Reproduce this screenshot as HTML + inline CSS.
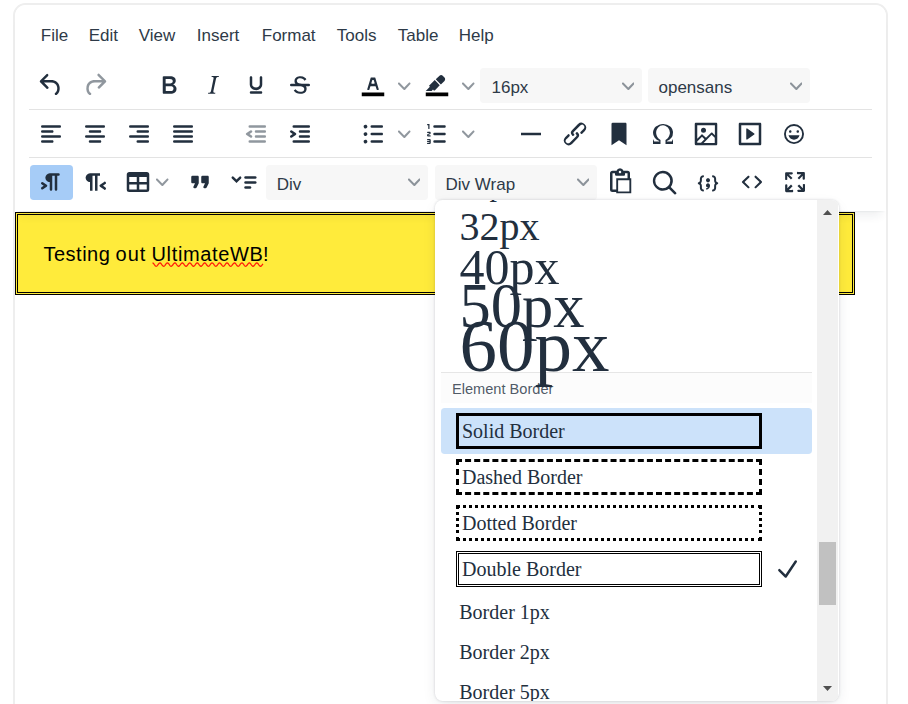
<!DOCTYPE html>
<html lang="en">
<head>
<meta charset="utf-8">
<title>Editor</title>
<style>
html,body{margin:0;padding:0;background:#fff;}
body{width:908px;height:704px;overflow:hidden;position:relative;font-family:"Liberation Sans",sans-serif;color:#222f3e;}
.abs{position:absolute;}
#frame{position:absolute;left:13px;top:3px;width:871px;height:760px;border:2px solid #eee;border-radius:12.5px;box-sizing:content-box;background:#fff;}
#header{position:absolute;left:15px;top:5px;width:871px;height:206px;background:#fff;border-radius:11px 11px 0 0;box-shadow:0 2.5px 2.5px -2.5px rgba(34,47,62,.1),0 10px 10px -5px rgba(34,47,62,.07);}
.hline{position:absolute;left:29px;width:843px;height:1px;background:#e3e3e3;}
.mi{position:absolute;top:24.75px;height:22px;line-height:22px;font-size:17px;white-space:nowrap;color:#2e3a48;}
.ic{position:absolute;width:30px;height:30px;}
.ic svg{width:30px;height:30px;display:block;fill:#222f3e;}
.ch{position:absolute;width:12.5px;height:12.5px;}
.ch svg{width:12.5px;height:12.5px;display:block;fill:rgba(34,47,62,.5);}
.sel{position:absolute;width:162px;height:35px;background:#f7f7f7;border-radius:3.75px;}
.sel span{position:absolute;left:10px;top:1.6px;line-height:35px;font-size:17px;white-space:nowrap;color:#2e3a48;}
#menubox{position:absolute;left:435px;top:199.75px;width:403.75px;height:501px;background:#fff;border-radius:7.5px;overflow:hidden;box-shadow:0 0 2.5px 0 rgba(34,47,62,.2),0 5px 16px -4px rgba(34,47,62,.15);}
.sf{position:absolute;font-family:"Liberation Serif",serif;white-space:nowrap;color:#222f3e;}
.ct{position:absolute;top:239px;font-size:20px;line-height:30px;color:#000;white-space:nowrap;}
</style>
</head>
<body>
<div id="frame"></div>
<div id="content">
<div class="abs" style="left:15px;top:212px;width:840px;height:83px;box-sizing:border-box;border:3px double #000;background:#ffeb3b"></div>
<div class="ct" style="left:43.5px;letter-spacing:0.5px">Testing</div>
<div class="ct" style="left:115.5px;letter-spacing:1.05px">out</div>
<div class="ct" style="left:151.5px;letter-spacing:0.65px">UltimateWB</div>
<div class="ct" style="left:263px">!</div>
<svg class="abs" style="left:0;top:0" width="908" height="300"><path d="M152.50 262.90 L153.00 263.05 L153.50 263.47 L154.00 264.09 L154.50 264.80 L155.00 265.47 L155.50 265.99 L156.00 266.27 L156.50 266.25 L157.00 265.95 L157.50 265.41 L158.00 264.73 L158.50 264.02 L159.00 263.42 L159.50 263.02 L160.00 262.90 L160.50 263.08 L161.00 263.52 L161.50 264.16 L162.00 264.87 L162.50 265.53 L163.00 266.03 L163.50 266.28 L164.00 266.24 L164.50 265.90 L165.00 265.34 L165.50 264.65 L166.00 263.95 L166.50 263.37 L167.00 263.00 L167.50 262.91 L168.00 263.11 L168.50 263.58 L169.00 264.23 L169.50 264.94 L170.00 265.59 L170.50 266.07 L171.00 266.29 L171.50 266.22 L172.00 265.86 L172.50 265.28 L173.00 264.58 L173.50 263.89 L174.00 263.32 L174.50 262.97 L175.00 262.91 L175.50 263.15 L176.00 263.64 L176.50 264.30 L177.00 265.01 L177.50 265.65 L178.00 266.10 L178.50 266.30 L179.00 266.19 L179.50 265.81 L180.00 265.21 L180.50 264.51 L181.00 263.82 L181.50 263.27 L182.00 262.95 L182.50 262.92 L183.00 263.19 L183.50 263.70 L184.00 264.37 L184.50 265.08 L185.00 265.70 L185.50 266.14 L186.00 266.30 L186.50 266.17 L187.00 265.76 L187.50 265.15 L188.00 264.44 L188.50 263.76 L189.00 263.23 L189.50 262.94 L190.00 262.94 L190.50 263.23 L191.00 263.76 L191.50 264.44 L192.00 265.15 L192.50 265.76 L193.00 266.17 L193.50 266.30 L194.00 266.14 L194.50 265.70 L195.00 265.08 L195.50 264.37 L196.00 263.70 L196.50 263.19 L197.00 262.92 L197.50 262.95 L198.00 263.27 L198.50 263.82 L199.00 264.51 L199.50 265.21 L200.00 265.81 L200.50 266.19 L201.00 266.30 L201.50 266.10 L202.00 265.65 L202.50 265.01 L203.00 264.30 L203.50 263.64 L204.00 263.15 L204.50 262.91 L205.00 262.97 L205.50 263.32 L206.00 263.89 L206.50 264.58 L207.00 265.28 L207.50 265.86 L208.00 266.22 L208.50 266.29 L209.00 266.07 L209.50 265.59 L210.00 264.94 L210.50 264.23 L211.00 263.58 L211.50 263.11 L212.00 262.91 L212.50 263.00 L213.00 263.37 L213.50 263.95 L214.00 264.65 L214.50 265.34 L215.00 265.90 L215.50 266.24 L216.00 266.28 L216.50 266.03 L217.00 265.53 L217.50 264.87 L218.00 264.16 L218.50 263.52 L219.00 263.08 L219.50 262.90 L220.00 263.02 L220.50 263.42 L221.00 264.02 L221.50 264.73 L222.00 265.41 L222.50 265.95 L223.00 266.25 L223.50 266.27 L224.00 265.99 L224.50 265.47 L225.00 264.80 L225.50 264.09 L226.00 263.47 L226.50 263.05 L227.00 262.90 L227.50 263.05 L228.00 263.47 L228.50 264.09 L229.00 264.80 L229.50 265.47 L230.00 265.99 L230.50 266.27 L231.00 266.25 L231.50 265.95 L232.00 265.41 L232.50 264.73 L233.00 264.02 L233.50 263.42 L234.00 263.02 L234.50 262.90 L235.00 263.08 L235.50 263.52 L236.00 264.16 L236.50 264.87 L237.00 265.53 L237.50 266.03 L238.00 266.28 L238.50 266.24 L239.00 265.90 L239.50 265.34 L240.00 264.65 L240.50 263.95 L241.00 263.37 L241.50 263.00 L242.00 262.91 L242.50 263.11 L243.00 263.58 L243.50 264.23 L244.00 264.94 L244.50 265.59 L245.00 266.07 L245.50 266.29 L246.00 266.22 L246.50 265.86 L247.00 265.28 L247.50 264.58 L248.00 263.89 L248.50 263.32 L249.00 262.97 L249.50 262.91 L250.00 263.15 L250.50 263.64 L251.00 264.30 L251.50 265.01 L252.00 265.65 L252.50 266.10 L253.00 266.30 L253.50 266.19 L254.00 265.81 L254.50 265.21 L255.00 264.51 L255.50 263.82 L256.00 263.27 L256.50 262.95 L257.00 262.92 L257.50 263.19 L258.00 263.70 L258.50 264.37 L259.00 265.08 L259.50 265.70 L260.00 266.14 L260.50 266.30 L261.00 266.17 L261.50 265.76 L262.00 265.15 L262.50 264.44 L263.00 263.76" fill="none" stroke="#ff1a0a" stroke-width="1.25" stroke-linejoin="round"/></svg>
</div>
<div id="header"></div>
<div id="toolbar">
<div class="hline" style="top:109px"></div>
<div class="hline" style="top:157px"></div>
<div class="mi" style="left:40.75px">File</div>
<div class="mi" style="left:88.75px">Edit</div>
<div class="mi" style="left:138.75px">View</div>
<div class="mi" style="left:196.75px">Insert</div>
<div class="mi" style="left:261.75px">Format</div>
<div class="mi" style="left:336.75px">Tools</div>
<div class="mi" style="left:397.75px">Table</div>
<div class="mi" style="left:458.75px">Help</div>
<div class="ic" style="left:36.25px;top:69.75px"><svg viewBox="0 0 24 24"><path d="M6.4 8H12c3.7 0 6.2 2 6.8 5.100.6 2.700-.4 5.600-2.300 6.800a1 1 0 0 1-1-1.800c1.100-.6 1.800-2.700 1.400-4.600-.5-2.100-2.100-3.500-4.900-3.500H6.400l3.300 3.300a1 1 0 1 1-1.400 1.400l-5-5a1 1 0 0 1 0-1.400l5-5a1 1 0 0 1 1.400 1.400L6.400 8Z" fill-rule="nonzero"/></svg></div>
<div class="ic" style="left:80.0px;top:69.75px"><svg viewBox="0 0 24 24" style="fill:rgba(34,47,62,.5)"><path d="M17.600 10H12c-2.800 0-4.400 1.400-4.900 3.500-.4 2 .3 4 1.400 4.600a1 1 0 1 1-1 1.800c-2-1.200-2.900-4.100-2.300-6.800.6-3 3-5.100 6.800-5.100h5.600l-3.300-3.300a1 1 0 1 1 1.400-1.400l5 5a1 1 0 0 1 0 1.400l-5 5a1 1 0 0 1-1.400-1.400l3.300-3.300Z" fill-rule="nonzero"/></svg></div>
<div class="ic" style="left:153.75px;top:69.75px"><svg viewBox="0 0 24 24"><path d="M7.800 19c-.3 0-.5 0-.6-.2l-.2-.5V5.700c0-.2 0-.4.200-.5l.6-.2h5c1.500 0 2.700.3 3.500 1 .7.600 1.100 1.400 1.100 2.500a3 3 0 0 1-.6 1.900c-.4.600-1 1-1.600 1.200.4.100.9.300 1.300.6s.8.700 1 1.200c.4.400.5 1 .5 1.600 0 1.300-.4 2.300-1.300 3-.8.700-2.100 1-3.800 1H7.800Zm5-8.300c.6 0 1.200-.1 1.600-.5.400-.3.600-.7.600-1.300 0-1.100-.8-1.700-2.300-1.700H9.300v3.500h3.400Zm.5 6c.7 0 1.300-.1 1.700-.4.400-.4.600-.9.600-1.500s-.2-1-.7-1.400c-.4-.3-1-.4-2-.4H9.400v3.800h4Z" fill-rule="evenodd"/></svg></div>
<div class="ic" style="left:197.5px;top:69.75px"><svg viewBox="0 0 24 24"><path d="m16.700 4.700-.1.900h-.3c-.6 0-1 0-1.400.3-.3.300-.4.600-.5 1.100l-2.100 9.800v.6c0 .5.400.8 1.400.8h.2l-.2.800H8l.2-.8h.2c1.100 0 1.800-.5 2-1.500l2-9.800.1-.5c0-.6-.4-.8-1.400-.8h-.3l.2-.9h5.800Z" fill-rule="evenodd"/></svg></div>
<div class="ic" style="left:241.25px;top:69.75px"><svg viewBox="0 0 24 24"><path d="M16 5c.6 0 1 .4 1 1v5.500a4 4 0 0 1-.4 1.800l-1 1.400a5.300 5.300 0 0 1-5.500 1 5 5 0 0 1-1.600-1c-.5-.4-.8-.9-1.100-1.400a4 4 0 0 1-.4-1.800V6c0-.6.400-1 1-1s1 .4 1 1v5.500c0 .3 0 .6.200 1l.6.700a3.300 3.300 0 0 0 2.200.8 3.400 3.400 0 0 0 2.200-.8c.3-.2.400-.5.600-.8l.2-.9V6c0-.6.400-1 1-1ZM8 17h8c.6 0 1 .4 1 1s-.4 1-1 1H8a1 1 0 0 1 0-2Z" fill-rule="evenodd"/></svg></div>
<div class="ic" style="left:285.0px;top:69.75px"><svg viewBox="0 0 24 24"><g fill-rule="evenodd"><path d="M15.600 8.500c-.5-.7-1-1.100-1.300-1.300-.6-.4-1.300-.6-2-.6-2.700 0-2.800 1.700-2.800 2.100 0 1.600 1.800 2 3.200 2.300 4.400.9 4.600 2.800 4.600 3.900 0 1.400-.7 4.100-5 4.100A6.200 6.200 0 0 1 7 16.400l1.500-1.100c.4.600 1.600 2 3.700 2 1.600 0 2.500-.4 3-1.200.4-.8.300-2-.8-2.600-.7-.4-1.600-.7-2.900-1-1-.2-3.900-.8-3.900-3.600C7.600 6 10.300 5 12.400 5c2.900 0 4.200 1.600 4.700 2.400l-1.500 1.100Z"/><path d="M5 11h14a1 1 0 0 1 0 2H5a1 1 0 0 1 0-2Z" fill-rule="nonzero"/></g></svg></div>
<div class="ic" style="left:358.25px;top:69.75px"><svg viewBox="0 0 24 24"><g fill-rule="evenodd"><path fill="#000" d="M3 18h18v3H3z"/><path d="M8.700 16h-.8a.5.5 0 0 1-.5-.6l2.700-9c.1-.3.3-.4.500-.4h2.800c.2 0 .4.100.5.400l2.700 9a.5.500 0 0 1-.5.600h-.8a.5.5 0 0 1-.4-.4l-.7-2.200c0-.3-.3-.4-.5-.4h-3.400c-.2 0-.4.100-.5.400l-.7 2.200c0 .3-.2.400-.4.400Zm2.600-7.600-.6 2a.5.5 0 0 0 .5.600h1.600a.5.5 0 0 0 .5-.6l-.6-2c0-.3-.3-.4-.5-.4h-.4c-.2 0-.4.100-.5.400Z"/></g></svg></div>
<div class="ch" style="left:398.25px;top:79.5px"><svg viewBox="0 0 10 10"><path d="M8.700 2.200c.3-.3.800-.3 1 0 .4.400.4.900 0 1.200L5.700 7.800c-.3.300-.9.300-1.200 0L.2 3.400a.8.8 0 0 1 0-1.200c.3-.3.800-.3 1.100 0L5 6l3.700-3.800Z" fill-rule="nonzero"/></svg></div>
<div class="ic" style="left:422.0px;top:69.75px"><svg viewBox="0 0 24 24"><g fill-rule="evenodd"><path fill="#000" d="M3 18h18v3H3z"/><path fill-rule="nonzero" d="M7.700 16.700H3l3.300-3.300-.7-.8L10.200 8l4 4.100-4 4.200c-.2.200-.6.200-.8 0l-.6-.7-1.100 1.100zm5-7.500L11 7.400l3-2.900a2 2 0 0 1 2.600 0L18 6c.7.700.7 2 0 2.700l-2.900 2.900-1.800-1.800-.5-.6"/></g></svg></div>
<div class="ch" style="left:462.0px;top:79.5px"><svg viewBox="0 0 10 10"><path d="M8.700 2.200c.3-.3.800-.3 1 0 .4.400.4.900 0 1.200L5.700 7.800c-.3.300-.9.300-1.200 0L.2 3.400a.8.8 0 0 1 0-1.200c.3-.3.800-.3 1.100 0L5 6l3.700-3.800Z" fill-rule="nonzero"/></svg></div>
<div class="sel" style="left:480px;top:68.25px"><span style="left:11.5px">16px</span></div><div class="ch" style="left:621.5px;top:79.5px"><svg viewBox="0 0 10 10"><path d="M8.700 2.200c.3-.3.800-.3 1 0 .4.400.4.900 0 1.200L5.700 7.800c-.3.300-.9.300-1.200 0L.2 3.400a.8.8 0 0 1 0-1.200c.3-.3.800-.3 1.100 0L5 6l3.700-3.800Z" fill-rule="nonzero"/></svg></div>
<div class="sel" style="left:648px;top:68.25px"><span style="left:10.5px">opensans</span></div><div class="ch" style="left:789.5px;top:79.5px"><svg viewBox="0 0 10 10"><path d="M8.700 2.200c.3-.3.800-.3 1 0 .4.400.4.900 0 1.200L5.700 7.800c-.3.300-.9.300-1.200 0L.2 3.400a.8.8 0 0 1 0-1.200c.3-.3.800-.3 1.100 0L5 6l3.700-3.800Z" fill-rule="nonzero"/></svg></div>
<div class="ic" style="left:36.25px;top:119.25px"><svg viewBox="0 0 24 24"><path d="M5 5h14c.6 0 1 .4 1 1s-.4 1-1 1H5a1 1 0 1 1 0-2Zm0 4h8c.6 0 1 .4 1 1s-.4 1-1 1H5a1 1 0 1 1 0-2Zm0 8h8c.6 0 1 .4 1 1s-.4 1-1 1H5a1 1 0 0 1 0-2Zm0-4h14c.6 0 1 .4 1 1s-.4 1-1 1H5a1 1 0 0 1 0-2Z" fill-rule="evenodd"/></svg></div>
<div class="ic" style="left:80.0px;top:119.25px"><svg viewBox="0 0 24 24"><path d="M5 5h14c.6 0 1 .4 1 1s-.4 1-1 1H5a1 1 0 1 1 0-2Zm3 4h8c.6 0 1 .4 1 1s-.4 1-1 1H8a1 1 0 1 1 0-2Zm0 8h8c.6 0 1 .4 1 1s-.4 1-1 1H8a1 1 0 0 1 0-2Zm-3-4h14c.6 0 1 .4 1 1s-.4 1-1 1H5a1 1 0 0 1 0-2Z" fill-rule="evenodd"/></svg></div>
<div class="ic" style="left:123.75px;top:119.25px"><svg viewBox="0 0 24 24"><path d="M5 5h14c.6 0 1 .4 1 1s-.4 1-1 1H5a1 1 0 1 1 0-2Zm6 4h8c.6 0 1 .4 1 1s-.4 1-1 1h-8a1 1 0 0 1 0-2Zm0 8h8c.6 0 1 .4 1 1s-.4 1-1 1h-8a1 1 0 0 1 0-2Zm-6-4h14c.6 0 1 .4 1 1s-.4 1-1 1H5a1 1 0 0 1 0-2Z" fill-rule="evenodd"/></svg></div>
<div class="ic" style="left:167.5px;top:119.25px"><svg viewBox="0 0 24 24"><path d="M5 5h14c.6 0 1 .4 1 1s-.4 1-1 1H5a1 1 0 1 1 0-2Zm0 4h14c.6 0 1 .4 1 1s-.4 1-1 1H5a1 1 0 1 1 0-2Zm0 4h14c.6 0 1 .4 1 1s-.4 1-1 1H5a1 1 0 0 1 0-2Zm0 4h14c.6 0 1 .4 1 1s-.4 1-1 1H5a1 1 0 0 1 0-2Z" fill-rule="evenodd"/></svg></div>
<div class="ic" style="left:241.0px;top:119.25px"><svg viewBox="0 0 24 24" style="fill:rgba(34,47,62,.5)"><path d="M7 5h12c.6 0 1 .4 1 1s-.4 1-1 1H7a1 1 0 1 1 0-2Zm5 4h7c.6 0 1 .4 1 1s-.4 1-1 1h-7a1 1 0 0 1 0-2Zm0 4h7c.6 0 1 .4 1 1s-.4 1-1 1h-7a1 1 0 0 1 0-2Zm-5 4h12a1 1 0 0 1 0 2H7a1 1 0 0 1 0-2Zm1.600-3.800a1 1 0 0 1-1.200 1.600l-3-2a1 1 0 0 1 0-1.600l3-2a1 1 0 0 1 1.200 1.600L6.800 12l1.800 1.200Z" fill-rule="evenodd"/></svg></div>
<div class="ic" style="left:284.75px;top:119.25px"><svg viewBox="0 0 24 24"><path d="M7 5h12c.6 0 1 .4 1 1s-.4 1-1 1H7a1 1 0 1 1 0-2Zm5 4h7c.6 0 1 .4 1 1s-.4 1-1 1h-7a1 1 0 0 1 0-2Zm0 4h7c.6 0 1 .4 1 1s-.4 1-1 1h-7a1 1 0 0 1 0-2Zm-5 4h12a1 1 0 0 1 0 2H7a1 1 0 0 1 0-2Zm-2.600-3.800L6.200 12l-1.800-1.200a1 1 0 0 1 1.200-1.600l3 2a1 1 0 0 1 0 1.600l-3 2a1 1 0 1 1-1.200-1.600Z" fill-rule="evenodd"/></svg></div>
<div class="ic" style="left:358.25px;top:119.25px"><svg viewBox="0 0 24 24"><path d="M11 5h8c.6 0 1 .4 1 1s-.4 1-1 1h-8a1 1 0 0 1 0-2Zm0 6h8c.6 0 1 .4 1 1s-.4 1-1 1h-8a1 1 0 0 1 0-2Zm0 6h8c.6 0 1 .4 1 1s-.4 1-1 1h-8a1 1 0 0 1 0-2ZM4.500 6c0-.4.100-.8.400-1 .3-.4.700-.5 1.100-.5.400 0 .8.100 1 .4.400.3.500.7.500 1.100 0 .4-.1.800-.4 1-.3.400-.7.500-1.100.5-.4 0-.8-.1-1-.4-.4-.3-.5-.7-.5-1.100Zm0 6c0-.4.100-.8.400-1 .3-.4.700-.5 1.100-.5.400 0 .8.100 1 .4.400.3.500.7.500 1.100 0 .4-.1.800-.4 1-.3.400-.7.500-1.100.5-.4 0-.8-.1-1-.4-.4-.3-.5-.7-.5-1.100Zm0 6c0-.4.100-.8.400-1 .3-.4.700-.5 1.100-.5.400 0 .8.100 1 .4.400.3.500.7.500 1.100 0 .4-.1.800-.4 1-.3.400-.7.500-1.100.5-.4 0-.8-.1-1-.4-.4-.3-.5-.7-.5-1.100Z" fill-rule="evenodd"/></svg></div>
<div class="ch" style="left:398.25px;top:128.0px"><svg viewBox="0 0 10 10"><path d="M8.700 2.200c.3-.3.800-.3 1 0 .4.400.4.900 0 1.200L5.700 7.800c-.3.300-.9.300-1.200 0L.2 3.400a.8.8 0 0 1 0-1.200c.3-.3.800-.3 1.100 0L5 6l3.700-3.800Z" fill-rule="nonzero"/></svg></div>
<div class="ic" style="left:422.0px;top:119.25px"><svg viewBox="0 0 24 24"><path d="M10 17h8c.6 0 1 .4 1 1s-.4 1-1 1h-8a1 1 0 0 1 0-2Zm0-6h8c.6 0 1 .4 1 1s-.4 1-1 1h-8a1 1 0 0 1 0-2Zm0-6h8c.6 0 1 .4 1 1s-.4 1-1 1h-8a1 1 0 1 1 0-2ZM6 4v3.500c0 .3-.2.500-.5.500a.5.5 0 0 1-.5-.5V5h-.5a.5.5 0 0 1 0-1H6Zm-1 8.800.2.200h1.300c.3 0 .5.200.5.500s-.2.500-.5.500H4.900a1 1 0 0 1-.9-1V13c0-.4.300-.8.600-1l1.200-.4.200-.3a.2.2 0 0 0-.2-.2H4.500a.5.5 0 0 1-.5-.5c0-.3.200-.5.500-.5h1.600c.5 0 .9.400.9 1v.1c0 .4-.3.800-.6 1l-1.200.4-.2.300ZM7 17v2c0 .6-.4 1-1 1H4.500a.5.5 0 0 1 0-1h1.200c.2 0 .3-.1.300-.3 0-.2-.1-.3-.3-.3H4.400a.4.4 0 1 1 0-.8h1.300c.2 0 .3-.1.300-.3 0-.2-.1-.3-.3-.3H4.500a.5.5 0 1 1 0-1H6c.6 0 1 .4 1 1Z" fill-rule="evenodd"/></svg></div>
<div class="ch" style="left:462.0px;top:128.0px"><svg viewBox="0 0 10 10"><path d="M8.700 2.200c.3-.3.800-.3 1 0 .4.400.4.900 0 1.200L5.700 7.800c-.3.300-.9.300-1.200 0L.2 3.400a.8.8 0 0 1 0-1.200c.3-.3.800-.3 1.100 0L5 6l3.700-3.800Z" fill-rule="nonzero"/></svg></div>
<div class="ic" style="left:516.25px;top:119.25px"><svg viewBox="0 0 24 24"><path d="M4 11h16v2H4z" fill-rule="evenodd"/></svg></div>
<div class="ic" style="left:560.0px;top:119.25px"><svg viewBox="0 0 24 24"><path d="M6.200 12.300a1 1 0 0 1 1.400 1.400l-2 2a2 2 0 1 0 2.600 2.800l4.800-4.800a1 1 0 0 0 0-1.400 1 1 0 1 1 1.400-1.300 2.900 2.900 0 0 1 0 4L9.600 20a3.900 3.900 0 0 1-5.500-5.500l2-2Zm11.600-.6a1 1 0 0 1-1.400-1.400l2-2a2 2 0 1 0-2.600-2.800L11 10.300a1 1 0 0 0 0 1.400A1 1 0 1 1 9.600 13a2.900 2.900 0 0 1 0-4L14.400 4a3.900 3.900 0 0 1 5.500 5.500l-2 2Z" fill-rule="nonzero"/></svg></div>
<div class="ic" style="left:603.75px;top:119.25px"><svg viewBox="0 0 24 24"><path d="M6 4v17l6-4 6 4V4c0-.6-.4-1-1-1H7a1 1 0 0 0-1 1Z" fill-rule="nonzero"/></svg></div>
<div class="ic" style="left:647.5px;top:119.25px"><svg viewBox="0 0 24 24"><path d="M15 18h4l1-2v4h-6v-3.300l1.400-1a6 6 0 0 0 1.800-2.900 6.300 6.300 0 0 0-.1-4.100 5.800 5.800 0 0 0-3-3.200c-.6-.3-1.300-.5-2.100-.5a5.100 5.100 0 0 0-3.900 1.800 6.300 6.300 0 0 0-1.300 6 6.200 6.200 0 0 0 1.800 3l1.400.9V20H4v-4l1 2h4v-.5l-2-1L5.400 15A6.500 6.500 0 0 1 4 11c0-1 .2-1.900.6-2.700A7 7 0 0 1 6.300 6C7.100 5.400 8 5 9 4.500c1-.3 2-.5 3.100-.5a8.800 8.800 0 0 1 5.700 2 7 7 0 0 1 1.700 2.300 6 6 0 0 1 .2 4.800c-.2.700-.6 1.300-1 1.900a7.600 7.600 0 0 1-3.600 2.500v.5Z" fill-rule="evenodd"/></svg></div>
<div class="ic" style="left:691.25px;top:119.25px"><svg viewBox="0 0 24 24"><path d="m5 15.700 3.300-3.200c.3-.3.700-.3 1 0L12 15l4.100-4c.3-.4.800-.4 1 0l2 1.900V5H5v10.700ZM5 18V19h3l2.800-2.900-2-2L5 17.900Zm14-3-2.500-2.400-6.400 6.500H19v-4ZM4 3h16c.6 0 1 .4 1 1v16c0 .6-.4 1-1 1H4a1 1 0 0 1-1-1V4c0-.6.400-1 1-1Zm6 8a2 2 0 1 0 0-4 2 2 0 0 0 0 4Z" fill-rule="nonzero"/></svg></div>
<div class="ic" style="left:735.0px;top:119.25px"><svg viewBox="0 0 24 24"><path d="M4 3h16c.6 0 1 .4 1 1v16c0 .6-.4 1-1 1H4a1 1 0 0 1-1-1V4c0-.6.400-1 1-1Zm1 2v14h14V5H5Zm4.800 2.600 5.600 4a.5.5 0 0 1 0 .8l-5.600 4A.5.5 0 0 1 9 16V8a.5.5 0 0 1 .8-.4Z" fill-rule="nonzero"/></svg></div>
<div class="ic" style="left:778.75px;top:119.25px"><svg viewBox="0 0 24 24"><path d="M9 11c.6 0 1-.4 1-1s-.4-1-1-1a1 1 0 0 0-1 1c0 .6.400 1 1 1Zm6 0c.6 0 1-.4 1-1s-.4-1-1-1a1 1 0 0 0-1 1c0 .6.400 1 1 1Zm-3 5.500c2.100 0 4-1.500 4.400-3.500H7.600c.5 2 2.300 3.500 4.400 3.500ZM12 4a8 8 0 1 0 0 16 8 8 0 0 0 0-16Zm0 14.500a6.500 6.500 0 1 1 0-13 6.500 6.500 0 0 1 0 13Z" fill-rule="nonzero"/></svg></div>
<div class="abs" style="left:30px;top:165.1px;width:42.5px;height:35px;background:#a6ccf7;border-radius:3.75px"></div>
<div class="ic" style="left:36.25px;top:166.5px"><svg viewBox="0 0 24 24"><path d="M11 5h7a1 1 0 0 1 0 2h-1v11a1 1 0 0 1-2 0V7h-2v11a1 1 0 0 1-2 0v-6c-.5 0-1 0-1.400-.3A3.400 3.400 0 0 1 7.800 10a3.300 3.300 0 0 1 0-2.800 3.400 3.400 0 0 1 1.800-1.800L11 5ZM4.400 16.200 6.200 15l-1.800-1.200a1 1 0 0 1 1.200-1.600l3 2a1 1 0 0 1 0 1.600l-3 2a1 1 0 1 1-1.200-1.600Z" fill-rule="evenodd"/></svg></div>
<div class="ic" style="left:80.0px;top:166.5px"><svg viewBox="0 0 24 24"><path d="M8 5h8v2h-2v12h-2V7h-2v12H8v-7c-.5 0-1 0-1.400-.3A3.400 3.400 0 0 1 4.800 10a3.300 3.300 0 0 1 0-2.800 3.400 3.400 0 0 1 1.800-1.800L8 5Zm12 11.200a1 1 0 1 1-1 1.600l-3-2a1 1 0 0 1 0-1.600l3-2a1 1 0 1 1 1 1.600L18.400 15l1.800 1.200Z" fill-rule="evenodd"/></svg></div>
<div class="ic" style="left:122.5px;top:166.5px"><svg viewBox="0 0 24 24"><path fill-rule="nonzero" d="M19 4a2 2 0 0 1 2 2v12a2 2 0 0 1-2 2H5a2 2 0 0 1-2-2V6c0-1.100.9-2 2-2h14ZM5 14v4h6v-4H5Zm14 0h-6v4h6v-4Zm0-6h-6v4h6V8ZM5 12h6V8H5v4Z"/></svg></div>
<div class="ch" style="left:156.25px;top:176.35px"><svg viewBox="0 0 10 10"><path d="M8.700 2.200c.3-.3.800-.3 1 0 .4.400.4.900 0 1.200L5.700 7.800c-.3.300-.9.300-1.200 0L.2 3.400a.8.8 0 0 1 0-1.200c.3-.3.800-.3 1.100 0L5 6l3.700-3.800Z" fill-rule="nonzero"/></svg></div>
<div class="ic" style="left:185.0px;top:166.5px"><svg viewBox="0 0 24 24"><path d="M7.500 17h.9c.4 0 .7-.2.900-.6L11 13V8c0-.6-.4-1-1-1H6a1 1 0 0 0-1 1v4c0 .6.400 1 1 1h2l-1.300 2.700a1 1 0 0 0 .8 1.300Zm8 0h.9c.4 0 .7-.2.900-.6L19 13V8c0-.6-.4-1-1-1h-4a1 1 0 0 0-1 1v4c0 .6.400 1 1 1h2l-1.300 2.700a1 1 0 0 0 .8 1.300Z" fill-rule="nonzero"/></svg></div>
<div class="ic" style="left:228.75px;top:166.5px"><svg viewBox="0 0 24 24"><rect x="12.2" y="7.300" width="9.800" height="2" rx="1"/><rect x="12.2" y="11.300" width="9.800" height="2" rx="1"/><rect x="12.200" y="15.300" width="5.600" height="2" rx="1"/><path fill-rule="evenodd" d="M2.300 7.700a1 1 0 0 1 1.400 0L6 10l2.300-2.300a1 1 0 0 1 1.400 1.400L6 12.800 2.300 9.100a1 1 0 0 1 0-1.400Z"/></svg></div>
<div class="sel" style="left:266.25px;top:165.1px"><span style="left:10.5px">Div</span></div><div class="ch" style="left:407.75px;top:176.35px"><svg viewBox="0 0 10 10"><path d="M8.700 2.200c.3-.3.800-.3 1 0 .4.400.4.900 0 1.200L5.700 7.800c-.3.300-.9.300-1.200 0L.2 3.400a.8.8 0 0 1 0-1.200c.3-.3.800-.3 1.100 0L5 6l3.700-3.800Z" fill-rule="nonzero"/></svg></div>
<div class="sel" style="left:435px;top:165.1px"><span style="left:10.5px">Div Wrap</span></div><div class="ch" style="left:576.5px;top:176.35px"><svg viewBox="0 0 10 10"><path d="M8.700 2.200c.3-.3.800-.3 1 0 .4.400.4.900 0 1.200L5.700 7.800c-.3.300-.9.300-1.200 0L.2 3.400a.8.8 0 0 1 0-1.200c.3-.3.800-.3 1.100 0L5 6l3.700-3.800Z" fill-rule="nonzero"/></svg></div>
<div class="ic" style="left:605.25px;top:166.5px"><svg viewBox="0 0 24 24"><path d="M18 9V5h-2v1c0 .6-.4 1-1 1H9a1 1 0 0 1-1-1V5H6v13h3V9h9ZM9 20H6a2 2 0 0 1-2-2V5c0-1.100.9-2 2-2h3.200A3 3 0 0 1 12 1a3 3 0 0 1 2.800 2H18a2 2 0 0 1 2 2v4h1v12H9v-1Zm1.500-9.500v9h9v-9h-9ZM12 3a1 1 0 0 0-1 1c0 .5.400 1 1 1s1-.5 1-1-.4-1-1-1Z" fill-rule="nonzero"/></svg></div>
<div class="ic" style="left:649.0px;top:166.5px"><svg viewBox="0 0 24 24"><path d="M16 17.300a8 8 0 1 1 1.400-1.400l4.300 4.400a1 1 0 0 1-1.400 1.400l-4.400-4.300Zm-5-.3a6 6 0 1 0 0-12 6 6 0 0 0 0 12Z" fill-rule="nonzero"/></svg></div>
<div class="ic" style="left:692.75px;top:166.5px"><svg viewBox="0 0 24 24"><path d="M7.100 11a2.800 2.800 0 0 1-.8 2 2.800 2.800 0 0 1 .8 2v1.700c0 .3.100.6.400.8.2.3.500.4.800.4.300 0 .4.200.4.400v.8c0 .2-.1.400-.4.400-.7 0-1.400-.3-2-.8-.5-.6-.8-1.300-.8-2V15c0-.3-.1-.6-.4-.8-.2-.3-.5-.4-.8-.4a.4.4 0 0 1-.4-.4v-.8c0-.2.200-.4.400-.4.300 0 .6-.1.800-.4.300-.2.400-.5.400-.8V9.300c0-.7.300-1.400.8-2 .6-.5 1.300-.8 2-.8.300 0 .4.200.4.400v.8c0 .2-.1.400-.4.400-.3 0-.6.100-.8.400-.3.200-.4.500-.4.800V11Zm9.800 0V9.300c0-.3-.1-.6-.4-.8-.2-.3-.5-.4-.8-.4a.4.4 0 0 1-.4-.4V7c0-.2.100-.4.400-.4.700 0 1.400.3 2 .8.500.6.800 1.300.8 2V11c0 .3.100.6.400.8.2.3.500.4.800.4.200 0 .4.200.4.400v.8c0 .2-.2.400-.4.400-.3 0-.6.100-.8.400-.3.200-.4.500-.4.800v1.700c0 .7-.3 1.400-.8 2-.6.500-1.300.8-2 .8a.4.4 0 0 1-.4-.4v-.8c0-.2.100-.4.400-.4.300 0 .6-.1.800-.4.300-.2.400-.5.400-.8V15a2.800 2.800 0 0 1 .8-2 2.800 2.800 0 0 1-.8-2Zm-3.300-.4c0 .4-.1.800-.5 1.100-.3.300-.7.500-1.100.5-.4 0-.8-.2-1.100-.5-.4-.3-.5-.7-.5-1.100 0-.5.100-.9.500-1.200.3-.3.700-.4 1.100-.4.400 0 .8.100 1.100.4.400.3.500.7.500 1.200ZM12 13c.4 0 .8.100 1.100.5.400.3.500.7.500 1.100 0 1-.1 1.600-.5 2a3 3 0 0 1-1.100 1c-.4.300-.8.400-1.100.4a.5.5 0 0 1-.5-.5V17a3 3 0 0 0 1-.2l.6-.6c-.6 0-1-.2-1.300-.5-.2-.3-.3-.7-.3-1 0-.5.100-1 .5-1.200.3-.4.700-.5 1.100-.5Z" fill-rule="evenodd"/></svg></div>
<div class="ic" style="left:736.5px;top:166.5px"><svg viewBox="0 0 24 24"><g fill-rule="nonzero"><path d="M9.800 15.700c.3.300.3.800 0 1-.3.400-.9.400-1.200 0l-4.400-4.100a.8.8 0 0 1 0-1.200l4.400-4.200c.3-.3.900-.3 1.200 0 .3.300.3.800 0 1.100L6 12l3.800 3.700ZM14.200 15.700c-.3.300-.3.800 0 1 .4.400.9.400 1.200 0l4.400-4.100c.3-.3.300-.9 0-1.200l-4.400-4.200a.8.8 0 0 0-1.200 0c-.3.300-.3.800 0 1.100L18 12l-3.800 3.700Z"/></g></svg></div>
<div class="ic" style="left:780.25px;top:166.5px"><svg viewBox="0 0 24 24"><path d="m15.300 10-1.200-1.300 2.900-3h-2.300a.9.9 0 1 1 0-1.700H19c.5 0 .9.400.9.900v4.400a.9.9 0 1 1-1.800 0V7l-2.900 3Zm0 4 3 3v-2.300a.9.9 0 1 1 1.700 0V19c0 .5-.4.900-.9.900h-4.400a.9.9 0 1 1 0-1.800H17l-3-2.900 1.300-1.200ZM10 15.400l-2.900 3h2.300a.9.9 0 1 1 0 1.700H5a.9.9 0 0 1-.9-.9v-4.400a.9.9 0 1 1 1.800 0V17l2.900-3 1.300 1.300Zm-1.200-5.400-3-3v2.300a.9.9 0 1 1-1.700 0V5c0-.5.400-.9.900-.9h4.400a.9.9 0 0 1 0 1.800H7l3 2.900-1.300 1.200Z" fill-rule="nonzero"/></svg></div>
</div>
<div id="menu">
<div id="menubox"><div class="abs" style="left:1px;top:0.25px;width:403px;height:501px">
<div class="abs" style="left:5.25px;top:172px;width:371px;height:1px;background:#e6e6e6"></div>
<div class="abs" style="left:5.25px;top:173px;width:371px;height:29.5px;background:#fcfcfc"></div>
<div class="abs" id="gh" style="left:16px;top:179.25px;font-size:14.6px;line-height:20px;color:rgba(34,47,62,.8);white-space:nowrap">Element Border</div>
<div class="sf" style="left:23.5px;top:-31.72px;font-size:30px;line-height:36.0px">24px</div>
<div class="sf" style="left:23.5px;top:2.50px;font-size:40px;line-height:48.0px">32px</div>
<div class="sf" style="left:23.5px;top:36.88px;font-size:50px;line-height:60.0px">40px</div>
<div class="sf" style="left:23.5px;top:68.66px;font-size:62.5px;line-height:75.0px">50px</div>
<div class="sf" style="left:23.5px;top:100.94px;font-size:75px;line-height:90.0px">60px</div>
<div class="abs" style="left:5.25px;top:208.25px;width:371px;height:45.5px;background:#cce2fa;border-radius:3.75px"></div>
<div class="abs" style="left:20px;top:213px;width:305.5px;height:36px;box-sizing:border-box;border:3px solid #000"></div>
<div class="sf" style="left:26px;top:218.85px;font-size:20px;line-height:24.0px">Solid Border</div>
<div class="abs" style="left:20px;top:259px;width:305.5px;height:36px;box-sizing:border-box;border:3px dashed #000"></div>
<div class="sf" style="left:26px;top:264.65px;font-size:20px;line-height:24.0px">Dashed Border</div>
<div class="abs" style="left:20px;top:305px;width:305.5px;height:36px;box-sizing:border-box;border:3px dotted #000"></div>
<div class="sf" style="left:26px;top:310.75px;font-size:20px;line-height:24.0px">Dotted Border</div>
<div class="abs" style="left:20px;top:351px;width:305.5px;height:36px;box-sizing:border-box;border:3px double #000"></div>
<div class="sf" style="left:26px;top:356.95px;font-size:20px;line-height:24.0px">Double Border</div>
<div class="sf" style="left:23.25px;top:400.00px;font-size:20px;line-height:24.0px">Border 1px</div>
<div class="sf" style="left:23.25px;top:440.00px;font-size:20px;line-height:24.0px">Border 2px</div>
<div class="sf" style="left:23.25px;top:480.00px;font-size:20px;line-height:24.0px">Border 5px</div>
<div class="ic" style="left:335.75px;top:353.75px"><svg viewBox="0 0 24 24"><path d="M18.200 5.400a1 1 0 0 1 1.600 1.200l-8 12a1 1 0 0 1-1.500.1l-5-5a1 1 0 1 1 1.400-1.400l4.100 4.100 7.400-11Z" fill-rule="nonzero"/></svg></div>
<div class="abs" style="left:381.25px;top:-1px;width:21px;height:503px;background:#f1f1f1"></div>
<div class="abs" style="left:383px;top:342px;width:17px;height:63px;background:#c1c1c1"></div>
<svg class="abs" style="left:387px;top:10px" width="9" height="5" viewBox="0 0 9 5"><path d="M0 5 L4.500 0 L9 5Z" fill="#505050"/></svg>
<svg class="abs" style="left:387px;top:485.75px" width="9" height="5" viewBox="0 0 9 5"><path d="M0 0 L4.500 5 L9 0Z" fill="#505050"/></svg>
</div></div>
</div>
</body>
</html>
